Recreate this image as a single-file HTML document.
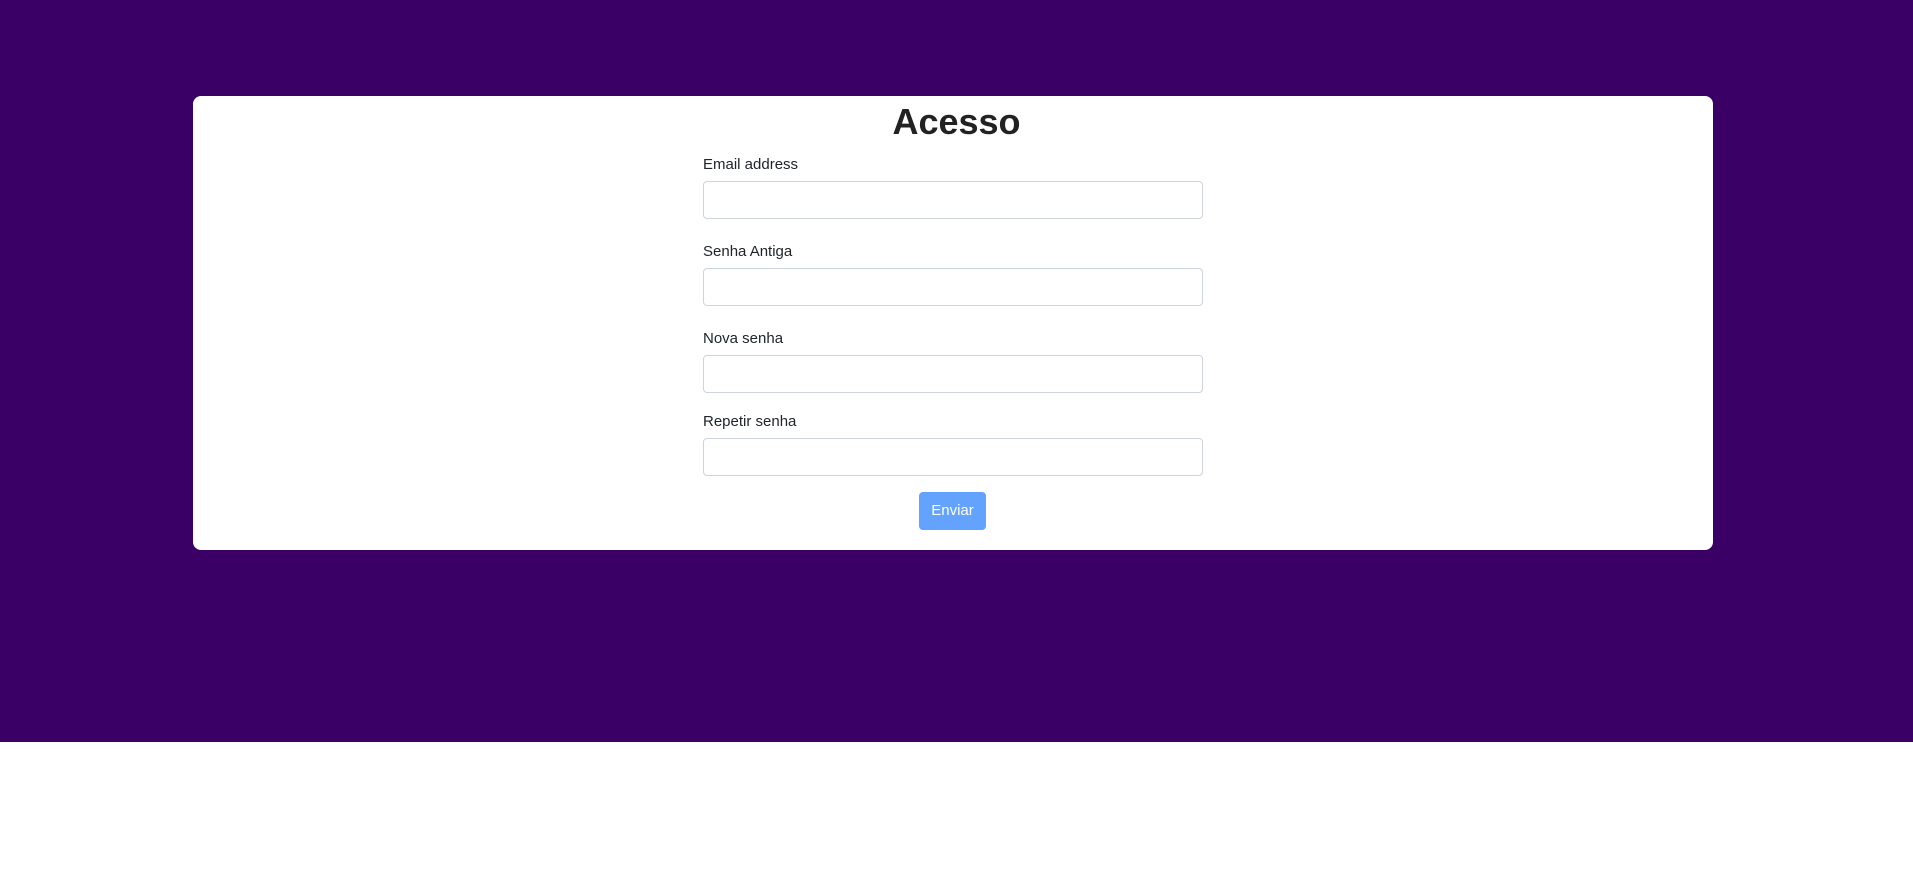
<!DOCTYPE html>
<html><head><meta charset="utf-8"><style>
body{margin:0;width:1913px;height:869px;background:#fff;font-family:"Liberation Sans",sans-serif;color:#212529;position:relative;overflow:hidden}
.bg{position:absolute;left:0;top:0;width:1913px;height:742px;background:#3a0066}
.card{position:absolute;left:193px;top:96px;width:1520px;height:454px;background:#fff;border-radius:8px}
h1{position:absolute;left:0;width:100%;top:98px;margin:0;text-align:center;font-size:36px;font-weight:bold;line-height:48px;color:#222}
label{position:absolute;left:703px;font-size:15px;line-height:20px}
.in{position:absolute;left:703px;width:498px;height:36px;border:1px solid #ced4da;border-radius:4px;background:#fff}
.btn{position:absolute;left:919px;top:492px;width:65px;height:36px;background:#63a2fd;border:1px solid #63a2fd;border-radius:4px;color:#fff;font-size:15px;line-height:36px;text-align:center}
</style></head><body>
<div class="bg"></div>
<div class="card"></div>
<h1>Acesso</h1>
<label style="top:155px">Email address</label>
<div class="in" style="top:181px"></div>
<label style="top:242px">Senha Antiga</label>
<div class="in" style="top:268px"></div>
<label style="top:329px">Nova senha</label>
<div class="in" style="top:355px"></div>
<label style="top:412px">Repetir senha</label>
<div class="in" style="top:438px"></div>
<div class="btn">Enviar</div>
</body></html>
